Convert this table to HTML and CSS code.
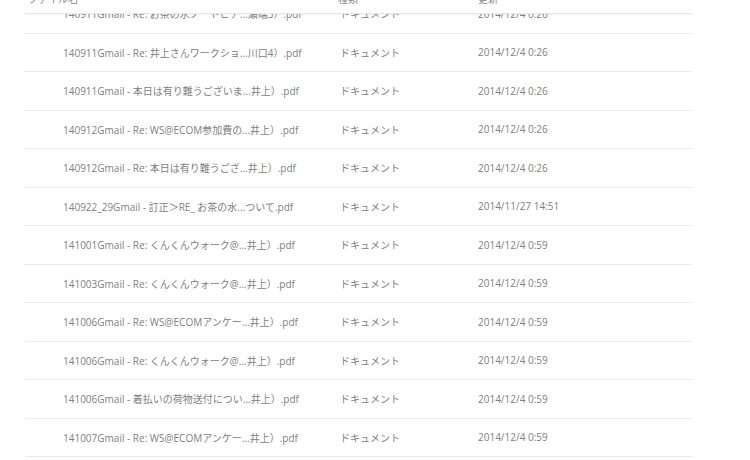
FILE: index.html
```html
<!DOCTYPE html>
<html lang="ja">
<head>
<meta charset="utf-8">
<link rel="stylesheet" href="styles.css">
</head>
<body>
<div class="table">
  <div class="head">
    <div class="cell name">ファイル名</div>
    <div class="cell kind">種類</div>
    <div class="cell date">更新</div>
  </div>
  <div class="rows">
    <div class="row"><div class="name">140911Gmail - Re: お茶の水ノートピア...瀬端3）.pdf</div><div class="kind">ドキュメント</div><div class="date">2014/12/4 0:26</div></div>
    <div class="row"><div class="name">140911Gmail - Re: 井上さんワークショ...川口4）.pdf</div><div class="kind">ドキュメント</div><div class="date">2014/12/4 0:26</div></div>
    <div class="row"><div class="name">140911Gmail - 本日は有り難うございま...井上）.pdf</div><div class="kind">ドキュメント</div><div class="date">2014/12/4 0:26</div></div>
    <div class="row"><div class="name">140912Gmail - Re: WS@ECOM参加費の...井上）.pdf</div><div class="kind">ドキュメント</div><div class="date">2014/12/4 0:26</div></div>
    <div class="row"><div class="name">140912Gmail - Re: 本日は有り難うござ...井上）.pdf</div><div class="kind">ドキュメント</div><div class="date">2014/12/4 0:26</div></div>
    <div class="row"><div class="name">140922_29Gmail - 訂正＞RE_ お茶の水...ついて.pdf</div><div class="kind">ドキュメント</div><div class="date">2014/11/27 14:51</div></div>
    <div class="row"><div class="name">141001Gmail - Re: くんくんウォーク@...井上）.pdf</div><div class="kind">ドキュメント</div><div class="date">2014/12/4 0:59</div></div>
    <div class="row"><div class="name">141003Gmail - Re: くんくんウォーク@...井上）.pdf</div><div class="kind">ドキュメント</div><div class="date">2014/12/4 0:59</div></div>
    <div class="row"><div class="name">141006Gmail - Re: WS@ECOMアンケー...井上）.pdf</div><div class="kind">ドキュメント</div><div class="date">2014/12/4 0:59</div></div>
    <div class="row"><div class="name">141006Gmail - Re: くんくんウォーク@...井上）.pdf</div><div class="kind">ドキュメント</div><div class="date">2014/12/4 0:59</div></div>
    <div class="row"><div class="name">141006Gmail - 着払いの荷物送付につい...井上）.pdf</div><div class="kind">ドキュメント</div><div class="date">2014/12/4 0:59</div></div>
    <div class="row"><div class="name">141007Gmail - Re: WS@ECOMアンケー...井上）.pdf</div><div class="kind">ドキュメント</div><div class="date">2014/12/4 0:59</div></div>
  </div>
</div>
</body>
</html>
```

FILE: styles.css
```css
html, body {
  margin: 0;
  padding: 0;
  background: #fff;
  overflow: hidden;
}
body {
  font-family: "Open Sans", "Noto Sans CJK JP", sans-serif;
  font-size: 10px;
  color: #808080;
}
.table {
  position: relative;
  display: flow-root;
  margin-left: 25px;
  width: 667px;
}
.head {
  position: absolute;
  left: 0;
  right: 0;
  top: -17px;
  height: 30px;
  background: #fff;
  border-bottom: 1px solid #e8e8e8;
  box-shadow: 0 1px 2px rgba(0,0,0,0.06);
  display: grid;
  grid-template-columns: 313px 140px 1fr;
  align-items: center;
  color: #8a8a8a;
  z-index: 1;
}
.head .name { padding-left: 3px; }
.rows {
  margin-top: -5px;
}
.row {
  height: 38.5px;
  box-sizing: border-box;
  border-bottom: 1.5px solid #ebebeb;
  display: grid;
  grid-template-columns: 315px 138px 1fr;
  align-items: center;
}
.row .name {
  padding-left: 38px;
  white-space: nowrap;
}
```
